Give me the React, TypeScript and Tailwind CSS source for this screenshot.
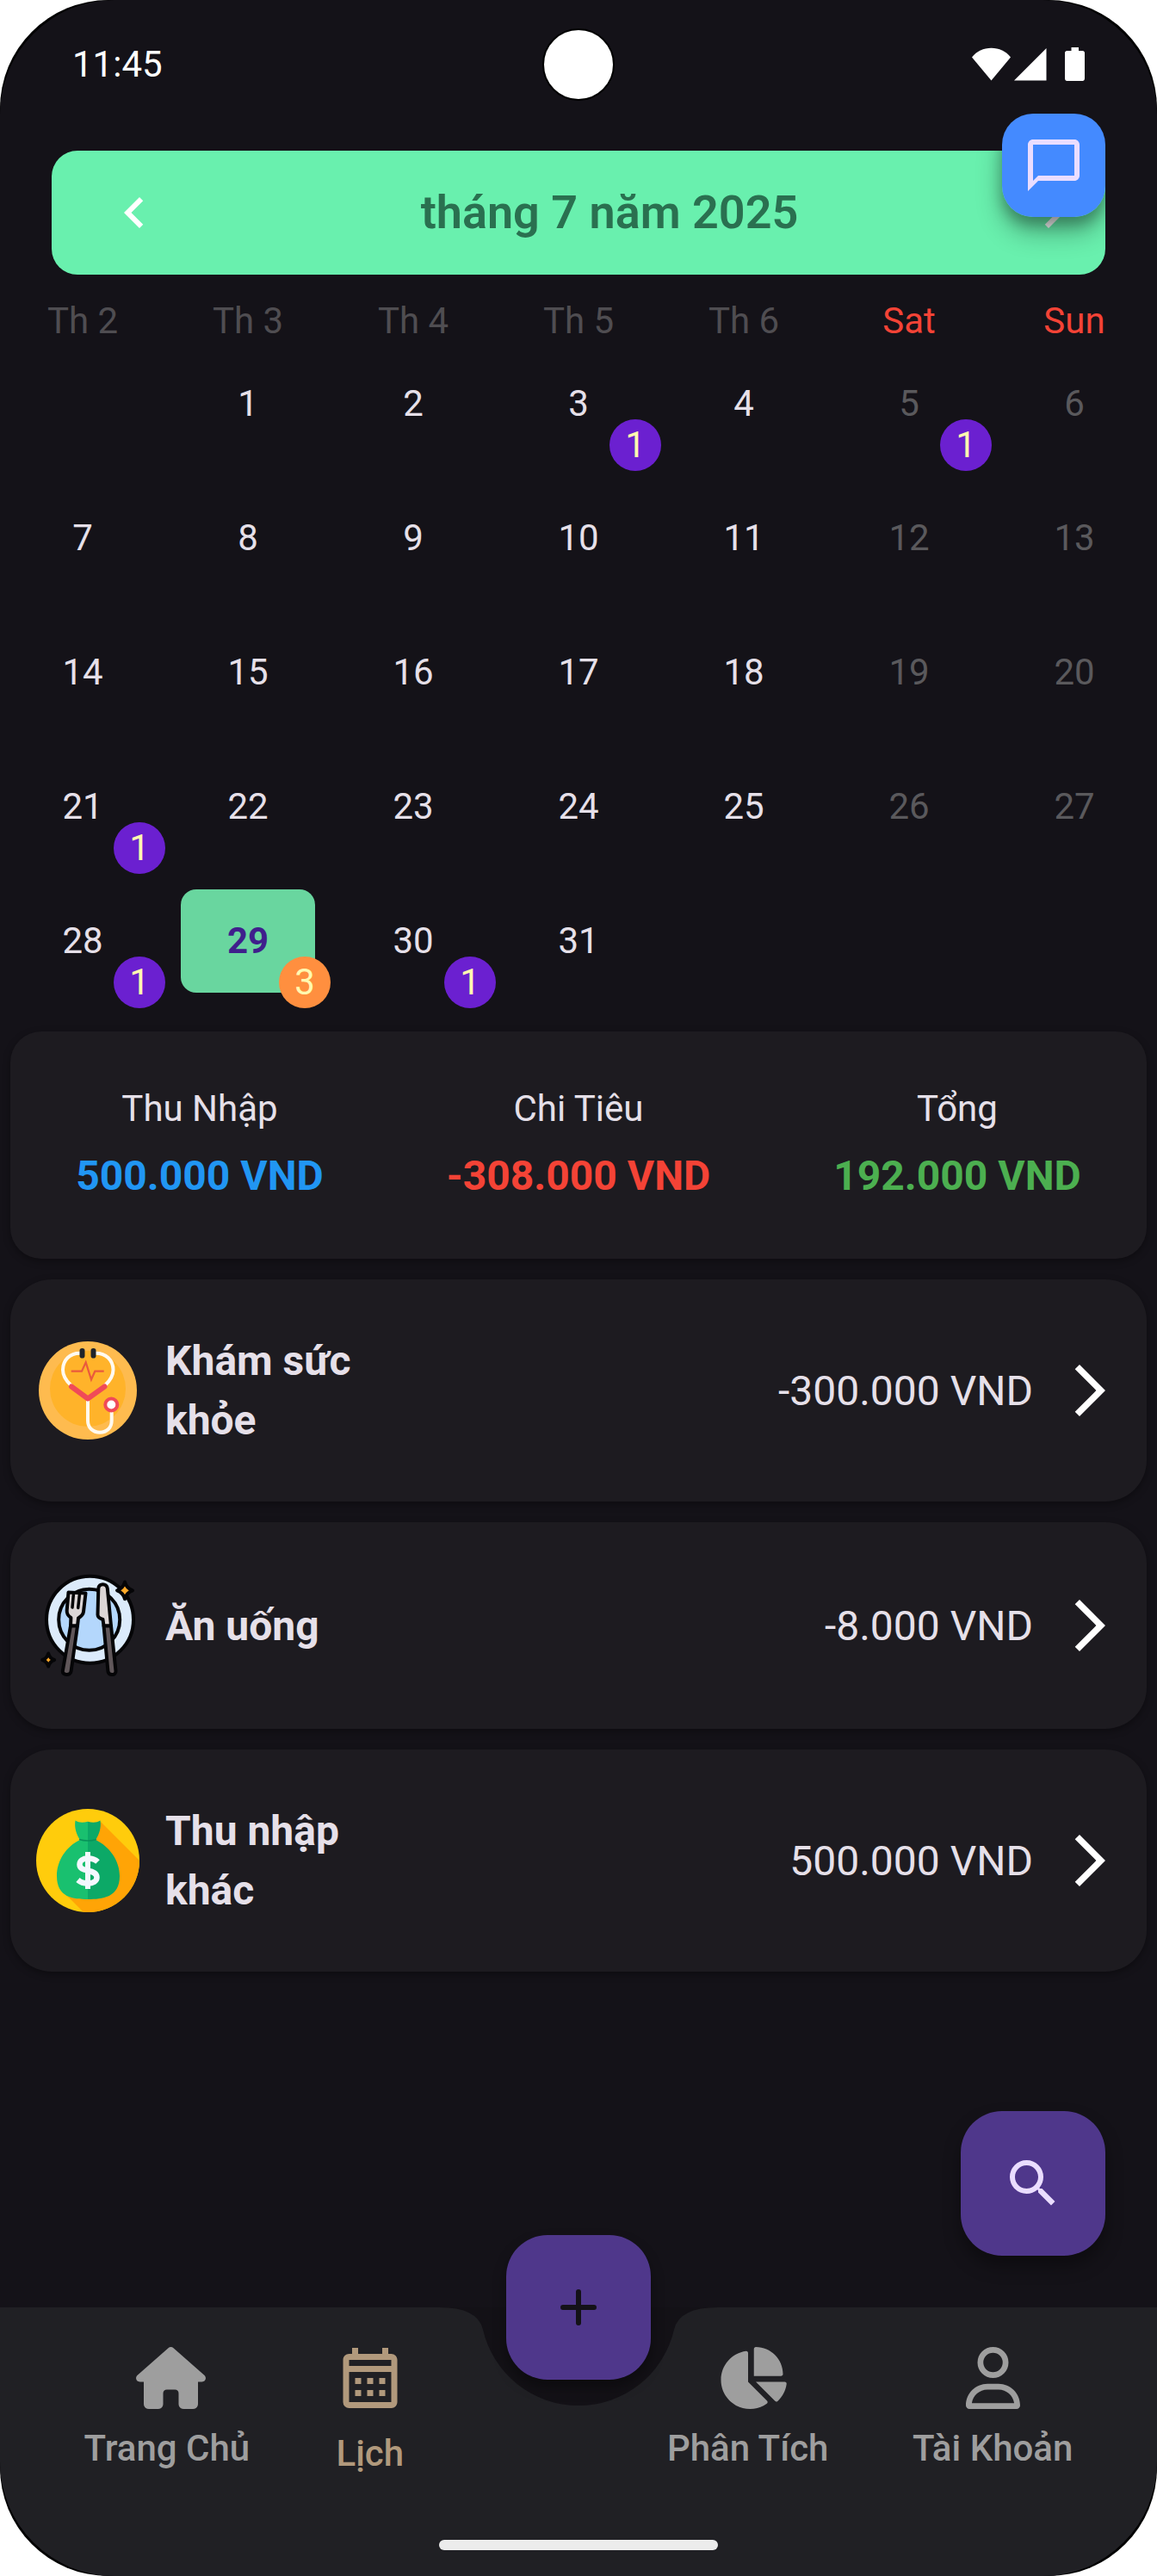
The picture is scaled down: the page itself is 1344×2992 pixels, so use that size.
import type { ReactNode } from "react";

type Day = { day: number; count?: number };

const WEEKDAYS = ["Th 2", "Th 3", "Th 4", "Th 5", "Th 6", "Sat", "Sun"];

const EVENTS: Record<number, number> = { 3: 1, 5: 1, 21: 1, 28: 1, 29: 3, 30: 1 };

const SELECTED = 29;

// The month starts on a Tuesday, so the first slot stays empty.
const WEEKS: (Day | null)[][] = Array.from({ length: 5 }, (_, week) =>
  Array.from({ length: 7 }, (_, col) => {
    const day = week * 7 + col;
    return day >= 1 && day <= 31 ? { day, count: EVENTS[day] } : null;
  }),
);

function MaterialIcon({ d, className }: { d: string; className: string }) {
  return (
    <svg viewBox="0 0 24 24" fill="currentColor" className={className} aria-hidden="true">
      <path d={d} />
    </svg>
  );
}

function StatusBar() {
  return (
    <div className="relative flex h-[175px] items-start justify-between pr-[84px] pl-[84px] pt-[45px] text-white">
      <span className="text-[42px] leading-[60px]">11:45</span>
      <div className="absolute top-[33px] left-1/2 size-[84px] -translate-x-1/2 rounded-full border-2 border-black bg-white" />
      <svg viewBox="0 0 131 39" className="mt-[10px] h-[39px] w-[131px]" fill="currentColor" aria-hidden="true">
        <path d="M0 11.5C5.500 4.500 13.500.8 22.500.8s17 3.700 22.500 10.700L22.500 38.500z" />
        <path d="M49 38.500 86.500 1v37.500z" />
        <path d="M115.500 0h8.500v4h4.500c1.500 0 2.500 1 2.500 2.500V36c0 1.800-1 3-2.500 3h-18c-1.500 0-2.500-1.200-2.500-3V6.500C108 5 109 4 110.500 4h5z" />
      </svg>
    </div>
  );
}

function CalendarHeader() {
  return (
    <div className="relative mx-[60px]">
      <div className="flex h-36 items-center rounded-[30px] bg-[#69f0ae] px-6">
        <button type="button" aria-label="Tháng trước" className="p-9 text-white">
          <MaterialIcon className="size-[72px]" d="M15.41 7.41 14 6l-6 6 6 6 1.410-1.410L10.830 12z" />
        </button>
        <h1 className="flex-1 text-center text-[54px] leading-[72px] font-semibold text-[#2a7050]">
          tháng 7 năm 2025
        </h1>
        <button type="button" aria-label="Tháng sau" className="text-white">
          <MaterialIcon className="size-[72px]" d="M10 6 8.590 7.410 13.170 12l-4.580 4.590L10 18l6-6z" />
        </button>
      </div>
      <div className="absolute inset-0 overflow-hidden rounded-[30px] pointer-events-none">
        <div className="absolute -top-[43px] right-0 size-[120px] rounded-[36px] shadow-[0_18px_30px_0_rgba(0,0,0,0.3),0_9px_15px_0_rgba(0,0,0,0.25)]" />
      </div>
      <button
        type="button"
        aria-label="Trò chuyện"
        className="absolute -top-[43px] right-0 flex size-[120px] items-center justify-center rounded-[36px] bg-[#448aff] text-[#eaddff]"
      >
        <MaterialIcon
          className="size-[72px]"
          d="M20 2H4c-1.100 0-2 .9-2 2v18l4-4h14c1.100 0 2-.9 2-2V4c0-1.100-.9-2-2-2zm0 14H6l-2 2V4h16v12z"
        />
      </button>
    </div>
  );
}

function DayCell({ cell, weekend }: { cell: Day | null; weekend: boolean }) {
  if (!cell) return <td className="h-[156px]" />;
  const selected = cell.day === SELECTED;
  const tone = selected
    ? "bg-[#69d69f] font-bold text-[#3f1f8c]"
    : weekend
      ? "text-[#5a595c]"
      : "text-[#e6e0e9]";
  return (
    <td className="relative h-[156px] p-[18px]">
      <button
        type="button"
        aria-pressed={selected}
        className={`flex h-[120px] w-full items-center justify-center rounded-[18px] text-[42px] leading-[48px] ${tone}`}
      >
        {cell.day}
      </button>
      {cell.count ? (
        <span
          className={`absolute right-0 bottom-0 flex size-[60px] items-center justify-center rounded-full text-[42px] leading-[48px] text-[#fff9b0] ${
            selected ? "bg-[#ff8f3f]" : "bg-[#6b20d0]"
          }`}
        >
          {cell.count}
        </span>
      ) : null}
    </td>
  );
}

function Calendar() {
  return (
    <table className="w-full table-fixed border-collapse">
      <thead>
        <tr>
          {WEEKDAYS.map((name, i) => (
            <th
              key={name}
              scope="col"
              className={`h-[72px] p-0 text-center align-bottom text-[42px] leading-[36px] font-normal ${
                i > 4 ? "text-[#f44336]" : "text-[#4f4d51]"
              }`}
            >
              {name}
            </th>
          ))}
        </tr>
      </thead>
      <tbody>
        {WEEKS.map((week, w) => (
          <tr key={w}>
            {week.map((cell, i) => (
              <DayCell key={i} cell={cell} weekend={i > 4} />
            ))}
          </tr>
        ))}
      </tbody>
    </table>
  );
}

function Total({ label, value, tone }: { label: string; value: string; tone: string }) {
  return (
    <div className="flex flex-col items-center gap-3">
      <span className="text-[42px] leading-[60px] text-[#e6e0e9]">{label}</span>
      <span className={`text-[48px] leading-[72px] font-bold ${tone}`}>{value}</span>
    </div>
  );
}

function StethoscopeIcon() {
  return (
    <svg viewBox="0 0 120 120" className="size-[120px] shrink-0" fill="none" aria-hidden="true">
      <circle cx="60" cy="60" r="57" fill="#febb4f" />
      <circle cx="60" cy="58" r="44" fill="#ffb32a" />
      <g stroke="#fffaf0" strokeWidth="4" strokeLinecap="round">
        <path d="M52 16.700C39 16 31 25 31 36c0 7 4 13 9.500 18" />
        <path d="M68 16.700C81 16 89.500 25 89.500 36c0 7-4 13-9.500 18" />
        <path d="M60 72v23c0 8.500 6 13.700 14 13.700S87.700 103.500 87.700 95V86" />
      </g>
      <path d="M41 55.500 60 69.500 79.500 55.500" stroke="#f04a58" strokeWidth="6" strokeLinecap="round" strokeLinejoin="round" />
      <path d="M40.700 37.700H53l4.700-10.400L64 47.300l4.300-9.600h10.400" stroke="#ea5a3c" strokeWidth="2.200" />
      <rect x="50.500" y="11" width="6" height="11.500" rx="2.800" fill="#20242a" />
      <rect x="63.500" y="11" width="6" height="11.500" rx="2.800" fill="#20242a" />
      <circle cx="87.300" cy="76.500" r="7" fill="#fff" stroke="#f04a58" strokeWidth="4" />
    </svg>
  );
}

function MealIcon() {
  return (
    <svg viewBox="0 0 120 120" className="size-[120px] shrink-0" fill="none" stroke="#050507" strokeWidth="4" strokeLinejoin="round" aria-hidden="true">
      <circle cx="62.500" cy="53.200" r="50.500" fill="#dcebfb" />
      <circle cx="61.700" cy="53.200" r="35.500" fill="#b4d7fc" />
      <path d="M37.500 21.500 57.500 22.500 55 44c-.5 4-3 5.500-6 7.500l-1 9h-8l.4-9.500c-3-2-5-4.500-4.700-8.500z" fill="#dcd6d6" />
      <path d="M43.500 22.500 42 39M50.500 23 48.700 39.500" strokeLinecap="round" strokeWidth="3.500" />
      <path d="M40 60.500h8l-7.500 53c-.8 5-10 4.500-9.700-.5z" fill="#60575a" />
      <path d="M72.300 17c.5-6.500 9.700-6.500 10.500 0L87 60.500h-8.500L77.500 53c-3-1-6-2-6-5.500z" fill="#dcd6d6" />
      <path d="M78.500 60.500H87l5.500 52.500c.3 5-8 5.500-9 .5z" fill="#60575a" />
      <path d="M103 9.500c1.500 5.500 4 8 9 9.800-5 1.800-7.500 4.300-9 9.800-1.500-5.500-4-8-9-9.800 5-1.800 7.500-4.300 9-9.800z" fill="#ffa928" />
      <path d="M14.200 92.500c1.200 4.500 3 6.300 7 7.500-4 1.200-5.800 3-7 7.500-1.200-4.500-3-6.300-7-7.500 4-1.200 5.800-3 7-7.500z" fill="#ffa928" />
    </svg>
  );
}

function MoneyBagIcon() {
  return (
    <svg viewBox="0 0 120 120" className="size-[120px] shrink-0" fill="none" aria-hidden="true">
      <clipPath id="coin">
        <circle cx="60" cy="60" r="60" />
      </clipPath>
      <circle cx="60" cy="60" r="60" fill="#ffcc0c" />
      <path d="M75 15 125 65V125H60L32 97z" fill="#ffa406" clipPath="url(#coin)" />
      <path
        d="M45.500 13.500c4.500 2.800 9 2.600 14.500 1.300V105C43 105 24 103 24 78c0-18 11-34.500 27-42-4-6-7-14-5.500-22.500z"
        fill="#19c06f"
      />
      <path
        d="M74.500 13.500c-4.500 2.800-9 2.600-14.500 1.300V105c17 0 37-2 37-27 0-18-12-34.500-28-42 4-6 7-14 5.500-22.500z"
        fill="#0ca967"
      />
      <path d="M50 35.500q10 3 20 0" stroke="#08925a" strokeWidth="1.500" />
      <path d="M60 50v43" stroke="#f4f8ff" strokeWidth="6" />
      <path d="M71.500 61.500C68.500 58.500 64.500 57.500 60 57.500c-5.500 0-9.500 2.500-9.500 7 0 5 4.500 6 9.500 7.200 6 1.300 10.500 2.800 10.500 7.800 0 4.500-4.500 7-10.500 7-5 0-8.500-1.300-11.500-4" stroke="#f4f8ff" strokeWidth="6.500" />
    </svg>
  );
}

function Entry({ icon, title, amount }: { icon: ReactNode; title: string; amount: string }) {
  return (
    <li>
      <a
        href="#entry"
        className="flex items-center gap-[30px] rounded-[48px] bg-[#1d1b20] px-[30px] py-[60px] text-[48px] leading-[69px] text-[#e6e0e9] shadow-[0_3px_9px_rgba(0,0,0,0.35)]"
      >
        {icon}
        <span className="w-60 font-bold">{title}</span>
        <span className="flex-1 text-right">{amount}</span>
        <MaterialIcon className="size-[72px] shrink-0 text-white" d="M6.230 20.230 8 22l10-10L8 2 6.230 3.770 14.460 12z" />
      </a>
    </li>
  );
}

function NavItem({ label, icon, active = false }: { label: string; icon: ReactNode; active?: boolean }) {
  return (
    <a
      href="#nav"
      aria-current={active ? "page" : undefined}
      className={`flex flex-col items-center gap-4 text-[42px] leading-[60px] font-medium ${
        active ? "text-[#b1997c]" : "text-[#9e9e9e]"
      }`}
    >
      {icon}
      {label}
    </a>
  );
}

function BottomNav() {
  return (
    <nav className="relative bg-[#202024] pt-10">
      <svg viewBox="-162 0 324 115" className="absolute top-0 left-1/2 h-[115px] w-[324px] -translate-x-1/2 fill-[#131116]" aria-hidden="true">
        <path d="M-162 0Q-117 0-111.100 25.600A114 114 0 0 0 111.100 25.600Q117 0 162 0Z" />
      </svg>
      <button
        type="button"
        aria-label="Thêm giao dịch"
        className="absolute -top-[84px] left-1/2 flex size-[168px] -translate-x-1/2 items-center justify-center rounded-[48px] bg-[#4f378b] text-[#141218] shadow-[0_9px_15px_rgba(0,0,0,0.35)]"
      >
        <svg viewBox="0 0 42 42" className="size-[42px]" stroke="currentColor" strokeWidth="6" strokeLinecap="round" aria-hidden="true">
          <path d="M3 21h36M21 3v36" />
        </svg>
      </button>
      <div className="flex items-center justify-evenly">
        <NavItem
          label="Trang Chủ"
          icon={
            <svg viewBox="0 0 72 72" className="size-[72px] overflow-visible" fill="currentColor" aria-hidden="true">
              <path d="M37.500 1.200c1.700-1.600 4.300-1.600 6 0L79.300 32.700c3.200 3 1.500 7.800-2.800 7.800H72V66c0 3.500-2.500 6-6 6H55.500c-3.500 0-6-2.500-6-6V54c0-3-1.500-4.500-4.500-4.500h-9c-3 0-4.500 1.500-4.500 4.500v12c0 3.500-2.500 6-6 6H15c-3.500 0-6-2.500-6-6V40.500H4.500C.2 40.500-1.500 35.700 1.700 32.700z" />
            </svg>
          }
        />
        <NavItem
          active
          label="Lịch"
          icon={
            <MaterialIcon
              className="size-[84px]"
              d="M19 4h-1V2h-2v2H8V2H6v2H5c-1.110 0-1.990.9-1.990 2L3 20a2 2 0 0 0 2 2h14c1.100 0 2-.9 2-2V6c0-1.100-.9-2-2-2zm0 16H5V10h14v10zm0-12H5V6h14v2zM9 14H7v-2h2v2zm4 0h-2v-2h2v2zm4 0h-2v-2h2v2zm-8 4H7v-2h2v2zm4 0h-2v-2h2v2zm4 0h-2v-2h2v2z"
            />
          }
        />
        <div className="w-27" />
        <NavItem
          label="Phân Tích"
          icon={
            <svg viewBox="0 0 512 512" className="size-[72px] overflow-visible" fill="currentColor" aria-hidden="true">
              <path d="M304 240V16.600c0-9 7-16.600 16-16.600C443.700 0 544 100.300 544 224c0 9-7.600 16-16.600 16H304zM32 272C32 150.700 122.100 50.300 239 34.300c9.200-1.300 17 6.100 17 15.400V288L412.500 444.500c6.700 6.700 6.200 17.700-1.500 23.100C371.800 495.600 323.800 512 272 512C139.500 512 32 404.600 32 272zm526.400 16c9.300 0 16.600 7.800 15.400 17c-7.700 55.900-34.600 105.600-73.900 142.300c-6 5.600-15.400 5.200-21.200-.7L320 288H558.400z" />
            </svg>
          }
        />
        <NavItem
          label="Tài Khoản"
          icon={
            <svg viewBox="0 0 448 512" className="h-[72px] w-[63px]" fill="currentColor" aria-hidden="true">
              <path d="M304 128a80 80 0 1 0-160 0 80 80 0 1 0 160 0zM96 128a128 128 0 1 1 256 0 128 128 0 1 1-256 0zM49.300 464H398.700c-8.900-63.300-63.300-112-129-112H178.300c-65.700 0-120.100 48.700-129 112zM0 482.300C0 383.800 79.800 304 178.300 304h91.400C368.200 304 448 383.800 448 482.300c0 16.400-13.300 29.700-29.700 29.700H29.700C13.300 512 0 498.700 0 482.300z" />
            </svg>
          }
        />
      </div>
      <div className="mx-auto mt-[70px] mb-[30px] h-3 w-[324px] rounded-full bg-[#ececec]" />
    </nav>
  );
}

export default function App() {
  return (
    <div className="min-h-screen bg-white font-['Roboto',sans-serif]">
      <div className="flex min-h-screen flex-col rounded-[126px] bg-black">
        <div className="flex flex-1 flex-col overflow-hidden rounded-[133px] bg-[#141218]">
          <StatusBar />
          <main className="relative flex flex-1 flex-col">
            <CalendarHeader />
            <Calendar />
            <section className="mx-3 mt-[27px] grid grid-cols-3 rounded-[36px] bg-[#1d1b20] py-[60px] shadow-[0_3px_9px_rgba(0,0,0,0.35)]">
              <Total label="Thu Nhập" value="500.000 VND" tone="text-[#2196f3]" />
              <Total label="Chi Tiêu" value="-308.000 VND" tone="text-[#f44336]" />
              <Total label="Tổng" value="192.000 VND" tone="text-[#4caf50]" />
            </section>
            <ul className="mx-3 mt-6 flex flex-col gap-6">
              <Entry icon={<StethoscopeIcon />} title="Khám sức khỏe" amount="-300.000 VND" />
              <Entry icon={<MealIcon />} title="Ăn uống" amount="-8.000 VND" />
              <Entry icon={<MoneyBagIcon />} title="Thu nhập khác" amount="500.000 VND" />
            </ul>
            <button
              type="button"
              aria-label="Tìm kiếm"
              className="absolute right-[60px] bottom-[60px] flex size-[168px] items-center justify-center rounded-[48px] bg-[#4f378b] text-[#eaddff] shadow-[0_12px_20px_rgba(0,0,0,0.35)]"
            >
              <MaterialIcon
                className="size-[72px]"
                d="M15.500 14h-.79l-.28-.27A6.471 6.471 0 0 0 16 9.500 6.500 6.500 0 1 0 9.500 16c1.610 0 3.090-.59 4.230-1.570l.27.28v.79l5 4.990L20.490 19l-4.990-5zm-6 0C7.010 14 5 11.990 5 9.500S7.010 5 9.500 5 14 7.010 14 9.500 11.990 14 9.500 14z"
              />
            </button>
          </main>
          <BottomNav />
        </div>
      </div>
    </div>
  );
}
